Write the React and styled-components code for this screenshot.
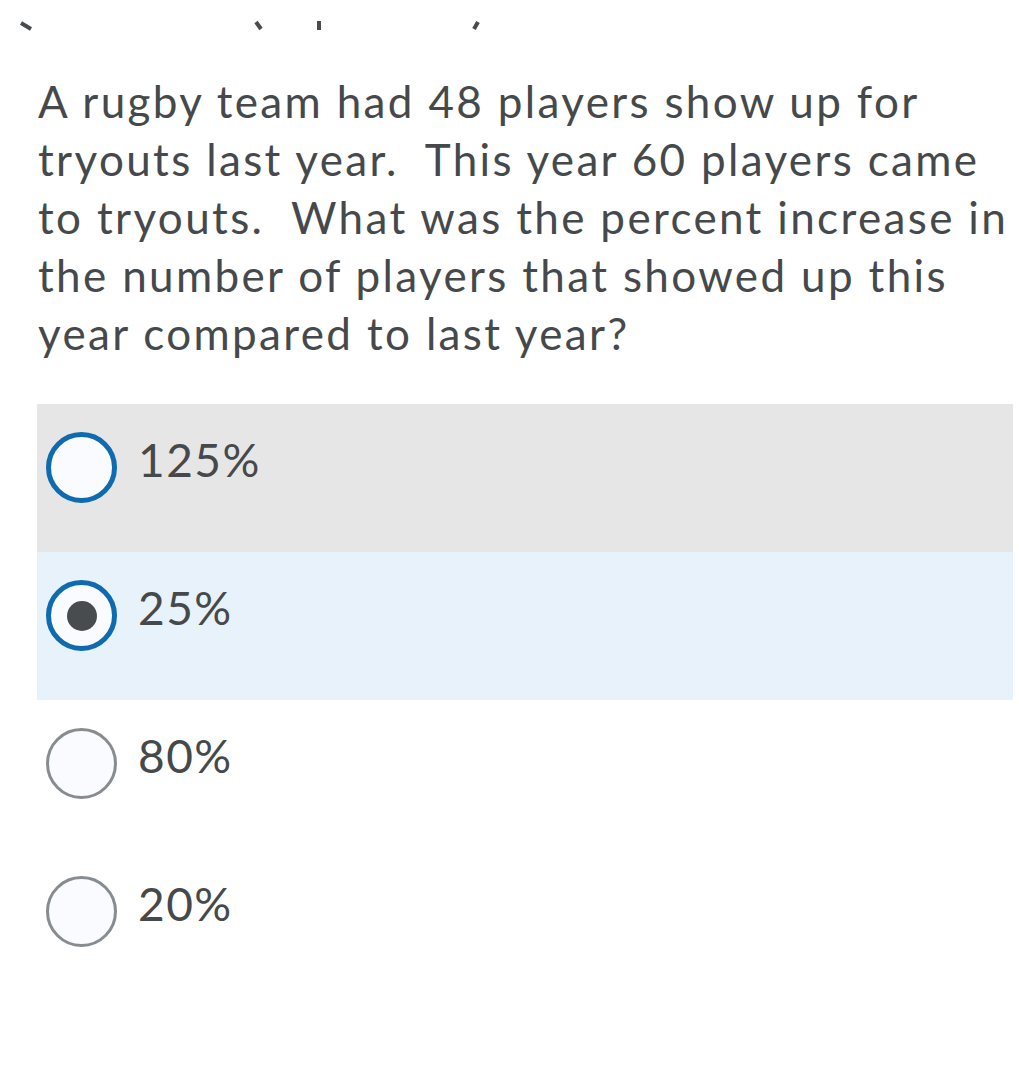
import React from 'react'
import styled, { createGlobalStyle } from 'styled-components'

const GlobalStyle = createGlobalStyle`
  body {
    margin: 0;
    background: #ffffff;
    font-family: Lato, 'Noto Sans', sans-serif;
    color: #494c4e;
  }
`

const Page = styled.div`
  width: 1019px;
  height: 1074px;
  overflow: hidden;
  background: #fff;
`

const CutLine = styled.svg`
  display: block;
  width: 520px;
  height: 34px;
  margin-top: 17px;
`

const Question = styled.p`
  margin: 21px 0 0 38px;
  font-size: 44px;
  line-height: 58px;
  letter-spacing: 2.35px;
  color: #46494b;
  white-space: pre-wrap;
`

const Options = styled.div`
  margin: 42px 6px 0 37px;
  display: flex;
  flex-direction: column;
`

const Row = styled.label`
  height: 148px;
  display: flex;
  align-items: flex-start;
  gap: 21px;
  padding: 28px 0 0 9px;
  box-sizing: border-box;
  background: ${p => (p.$state === 'hover' ? '#e6e6e6' : p.$state === 'selected' ? '#e7f2fb' : 'transparent')};
`

const Circle = styled.span`
  width: 71px;
  height: 71px;
  flex: none;
  box-sizing: border-box;
  border-radius: 50%;
  background: #f9fbff;
  border: ${p => (p.$active ? '5px solid #0f6bb0' : '3px solid #868c8f')};
  display: flex;
  align-items: center;
  justify-content: center;
`

const Dot = styled.span`
  width: 30px;
  height: 30px;
  border-radius: 50%;
  background: #494c4e;
`

const Label = styled.span`
  font-size: 46px;
  line-height: 70px;
  letter-spacing: 1.5px;
  margin-top: -7px;
  color: #46494b;
`

const options = [
  { text: '125%', state: 'hover', active: true },
  { text: '25%', state: 'selected', active: true, checked: true },
  { text: '80%' },
  { text: '20%' },
]

export default function App() {
  return (
    <Page>
      <GlobalStyle />
      <CutLine viewBox="0 0 520 34">
        <g stroke="#494c4e" strokeWidth="4" strokeLinecap="butt">
          <line x1="21" y1="6" x2="31" y2="12" />
          <line x1="256" y1="5" x2="261" y2="12" />
          <line x1="319" y1="4" x2="319" y2="13" />
          <line x1="478" y1="5" x2="474" y2="12" />
        </g>
      </CutLine>
      <Question>
        {'A rugby team had 48 players show up for\ntryouts last year.  This year 60 players came\nto tryouts.  What was the percent increase in\nthe number of players that showed up this\nyear compared to last year?'}
      </Question>
      <Options>
        {options.map(o => (
          <Row key={o.text} $state={o.state}>
            <Circle $active={o.active}>{o.checked && <Dot />}</Circle>
            <Label>{o.text}</Label>
          </Row>
        ))}
      </Options>
    </Page>
  )
}
